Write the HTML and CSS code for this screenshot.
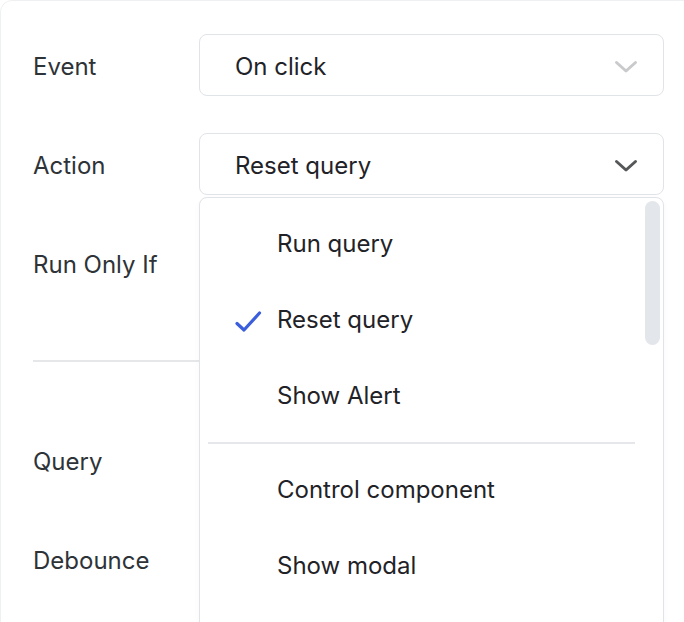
FILE: index.html
```html
<!DOCTYPE html>
<html lang="en">
<head>
<meta charset="utf-8">
<title>Event handler</title>
<link rel="stylesheet" href="styles.css">
</head>
<body>
<div class="card">
  <div class="row">
    <div class="label">Event</div>
    <div class="select">
      <span class="value">On click</span>
      <svg class="chev chev-light" width="24" height="14" viewBox="0 0 24 14"><path d="M2.5 2.5 L12 11 L21.5 2.5" fill="none" stroke="currentColor" stroke-width="3" stroke-linecap="round" stroke-linejoin="round"/></svg>
    </div>
  </div>
  <div class="row">
    <div class="label">Action</div>
    <div class="select">
      <span class="value">Reset query</span>
      <svg class="chev chev-dark" width="24" height="14" viewBox="0 0 24 14"><path d="M2.5 2.5 L12 11 L21.5 2.5" fill="none" stroke="currentColor" stroke-width="3" stroke-linecap="round" stroke-linejoin="round"/></svg>
    </div>
  </div>
  <div class="row">
    <div class="label">Run Only If</div>
    <div class="select"></div>
  </div>
  <div class="divider"></div>
  <div class="row">
    <div class="label">Query</div>
    <div class="select"></div>
  </div>
  <div class="row">
    <div class="label">Debounce</div>
    <div class="select"></div>
  </div>

  <div class="menu">
    <div class="item">Run query</div>
    <div class="item">
      <svg class="check" width="28" height="22" viewBox="0 0 28 22"><path d="M3 13.5 L10 20 L25.5 3" fill="none" stroke="currentColor" stroke-width="3.2" stroke-linecap="round" stroke-linejoin="round"/></svg>
      Reset query
    </div>
    <div class="item">Show Alert</div>
    <div class="sep"></div>
    <div class="item">Control component</div>
    <div class="item">Show modal</div>
    <div class="thumb"></div>
  </div>
</div>
</body>
</html>
```

FILE: styles.css
```css
html, body {
  margin: 0;
  padding: 0;
  background: #ffffff;
  overflow: hidden;
}

body {
  font-family: Inter, "Noto Sans", "Liberation Sans", sans-serif;
  color: #24292f;
}

.card {
  position: relative;
  box-sizing: border-box;
  width: 720px;
  height: 700px;
  border: 1px solid #eff0f2;
  border-radius: 12px;
  padding: 33px 0 0 32px;
}

.row {
  display: grid;
  grid-template-columns: 166px 465px;
  height: 62px;
  align-items: center;
  margin-bottom: 37px;
}

.label {
  font-size: 24px;
  color: #2e3338;
  padding-top: 2px;
}

.select {
  box-sizing: border-box;
  height: 62px;
  border: 1px solid #e0e3e7;
  border-radius: 8px;
  display: flex;
  align-items: center;
  justify-content: space-between;
  padding: 0 25px 0 35px;
}

.value {
  font-size: 24px;
  color: #1f2328;
  padding-top: 2px;
}

.chev {
  margin-top: 4px;
}

.chev-light { color: #c9cacc; }
.chev-dark { color: #555759; }

.divider {
  height: 2px;
  background: #e6e7e9;
  width: 630px;
  margin: 66px 0 67px 0;
}

.row:nth-child(3) {
  margin-bottom: 0;
}

.menu {
  position: absolute;
  left: 198px;
  top: 196px;
  width: 465px;
  height: 460px;
  box-sizing: border-box;
  background: #ffffff;
  border: 1px solid #e0e3e7;
  border-radius: 8px;
  padding: 8px 28px 0 0;
  box-shadow: 0 2px 6px rgba(0, 0, 0, 0.03);
}

.item {
  position: relative;
  box-sizing: border-box;
  height: 76px;
  display: flex;
  align-items: center;
  padding: 0 0 2px 77px;
  font-size: 24px;
  color: #1f2328;
}

.check {
  position: absolute;
  left: 34px;
  top: 28px;
  color: #3b5fdc;
}

.sep {
  height: 2px;
  background: #e5e7ea;
  margin: 8px 0 8px 8px;
}

.thumb {
  position: absolute;
  right: 3px;
  top: 3px;
  width: 15px;
  height: 144px;
  border-radius: 8px;
  background: #e3e6ea;
}
```
